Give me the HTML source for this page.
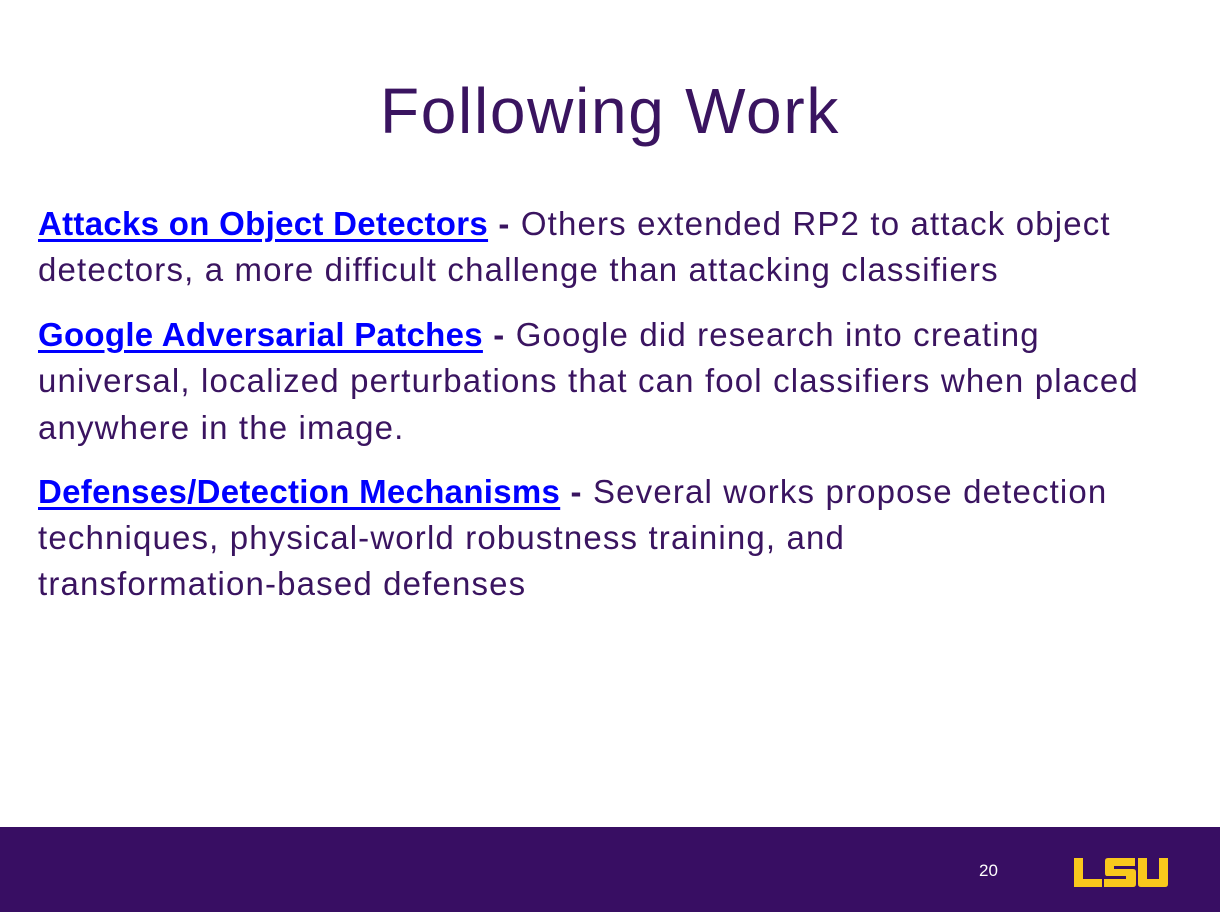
<!DOCTYPE html>
<html><head><meta charset="utf-8"><style>
html,body{margin:0;padding:0}
body{width:1220px;height:912px;position:relative;background:#fff;overflow:hidden;font-family:"Liberation Sans",sans-serif;color:#3a1460}
.t{position:absolute;top:79px;left:0;width:1220px;text-align:center;font-size:64px;line-height:1;letter-spacing:1.7px;color:#3a1460}
.l{position:absolute;left:38px;font-size:33px;line-height:1;white-space:nowrap;letter-spacing:1.15px}
a{color:#0000ff;font-weight:bold;letter-spacing:0.3px;text-decoration:underline;text-decoration-thickness:3px;text-underline-offset:4px}
.bar{position:absolute;left:0;top:827px;width:1220px;height:85px;background:#380e63}
.n{position:absolute;left:979px;top:861px;color:#fff;font-size:17px}
</style></head><body>
<div class="t">Following Work</div>
<div class="l" style="top:207px"><a>Attacks on Object Detectors</a> <b>-</b> Others extended RP2 to attack object</div>
<div class="l" style="top:253px">detectors, a more difficult challenge than attacking classifiers</div>
<div class="l" style="top:318px"><a>Google Adversarial Patches</a> <b>-</b> Google did research into creating</div>
<div class="l" style="top:364px">universal, localized perturbations that can fool classifiers when placed</div>
<div class="l" style="top:411px">anywhere in the image.</div>
<div class="l" style="top:475px"><a>Defenses/Detection Mechanisms</a> <b>-</b> Several works propose detection</div>
<div class="l" style="top:521px">techniques, physical-world robustness training, and</div>
<div class="l" style="top:567px">transformation-based defenses</div>
<div class="bar"></div>
<div class="n">20</div>
<svg style="position:absolute;left:0;top:0" width="1220" height="912">
<g fill="#f9c81c">
<path d="M1074 858h9v21h19v8h-28z"/>
<path d="M1105 858h30v8h-21v3h19q3 0 3 3v12q0 3-3 3h-29v-8h22v-3h-19q-2 0-2-3v-12q0-3 3-3z"/>
<path d="M1138 858h9v21h12v-21h9v26q0 3-3 3h-24q-3 0-3-3z"/>
</g></svg>
</body></html>
